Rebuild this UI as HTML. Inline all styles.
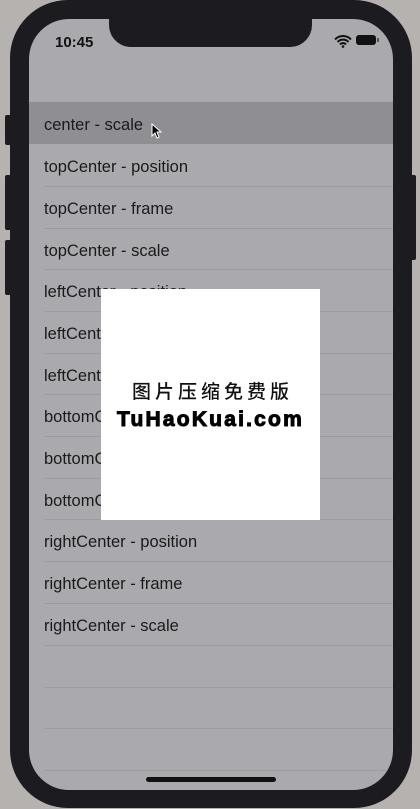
<!DOCTYPE html>
<html><head><meta charset="utf-8"><style>
body{margin:0;width:420px;height:809px;overflow:hidden;background:#b5b2b0;position:relative;font-family:"Liberation Sans",sans-serif}
.frame{position:absolute;left:10px;top:0;width:402px;height:808px;background:#1c1b1f;border-radius:58px}
.btn{position:absolute;background:#1c1b1f;width:6px;border-radius:2px}
.screen{position:absolute;left:29px;top:19px;width:364px;height:771px;background:#aaa9ae;border-radius:40px;overflow:hidden}
.notch{position:absolute;left:80px;top:0;width:203px;height:28px;background:#1c1b1f;border-radius:0 0 22px 22px}
.time{position:absolute;left:26px;top:15px;font-size:15px;font-weight:bold;color:#111}
.row{position:absolute;left:0;width:364px;height:41.67px;box-sizing:border-box;font-size:16.5px;color:#1a1a1a;line-height:47px;padding-left:15px}
.sep{position:absolute;left:15px;right:0;height:1px;background:#9c9ba0}
.box{position:absolute;left:101px;top:289px;width:219px;height:231px;background:#fff}
.cn{position:absolute;left:0;right:0;top:88px;text-align:center;font-family:"Noto Sans CJK SC",sans-serif;font-size:19px;font-weight:500;letter-spacing:4px;padding-left:4px;color:#111}
.en{position:absolute;left:0;right:0;top:119px;text-align:center;font-size:21px;font-weight:bold;color:#000;letter-spacing:2.2px;-webkit-text-stroke:1px #000}
.home{position:absolute;left:117px;top:758px;width:130px;height:5px;border-radius:3px;background:#111}
</style></head><body>
<div class="btn" style="left:5px;top:115px;height:30px"></div>
<div class="btn" style="left:5px;top:175px;height:55px"></div>
<div class="btn" style="left:5px;top:240px;height:55px"></div>
<div class="btn" style="left:410px;top:175px;height:85px"></div>
<div class="frame"></div>
<div class="screen">
<div class="notch"></div>
<div class="time">10:45</div>
<svg style="position:absolute;left:305px;top:16px" width="18" height="13" viewBox="0 0 18 13"><path d="M1 4.5a11 11 0 0 1 16 0M3.5 7a7.5 7.5 0 0 1 11 0M6 9.5a4 4 0 0 1 6 0" stroke="#111" stroke-width="2" fill="none"/><circle cx="9" cy="11.5" r="1.3" fill="#111"/></svg>
<div style="position:absolute;left:327px;top:16px;width:20px;height:10px;background:#111;border-radius:3px"></div>
<div style="position:absolute;left:348px;top:19px;width:2px;height:4px;background:#555"></div>
<div class="row" style="top:83px;background:#8f8e93;height:42px">center - scale</div>
<svg style="position:absolute;left:122px;top:104px" width="12" height="16" viewBox="0 0 12 16"><path d="M1 1v12l3-3 2 5 2-1-2-5h4z" fill="#000" stroke="#fff" stroke-width="1"/></svg>
<div class="row" style="top:125px">topCenter - position</div>
<div class="sep" style="top:167px"></div>
<div class="row" style="top:167px">topCenter - frame</div>
<div class="sep" style="top:209px"></div>
<div class="row" style="top:209px">topCenter - scale</div>
<div class="sep" style="top:250px"></div>
<div class="row" style="top:250px">leftCenter - position</div>
<div class="sep" style="top:292px"></div>
<div class="row" style="top:292px">leftCenter - frame</div>
<div class="sep" style="top:334px"></div>
<div class="row" style="top:334px">leftCenter - scale</div>
<div class="sep" style="top:375px"></div>
<div class="row" style="top:375px">bottomCenter - position</div>
<div class="sep" style="top:417px"></div>
<div class="row" style="top:417px">bottomCenter - frame</div>
<div class="sep" style="top:459px"></div>
<div class="row" style="top:459px">bottomCenter - scale</div>
<div class="sep" style="top:500px"></div>
<div class="row" style="top:500px">rightCenter - position</div>
<div class="sep" style="top:542px"></div>
<div class="row" style="top:542px">rightCenter - frame</div>
<div class="sep" style="top:584px"></div>
<div class="row" style="top:584px">rightCenter - scale</div>
<div class="sep" style="top:626px"></div>
<div class="sep" style="top:668px"></div>
<div class="sep" style="top:709px"></div>
<div class="sep" style="top:751px"></div>
<div class="home"></div>
</div>
<div class="box"><div class="cn">图片压缩免费版</div><div class="en">TuHaoKuai.com</div></div>
</body></html>
